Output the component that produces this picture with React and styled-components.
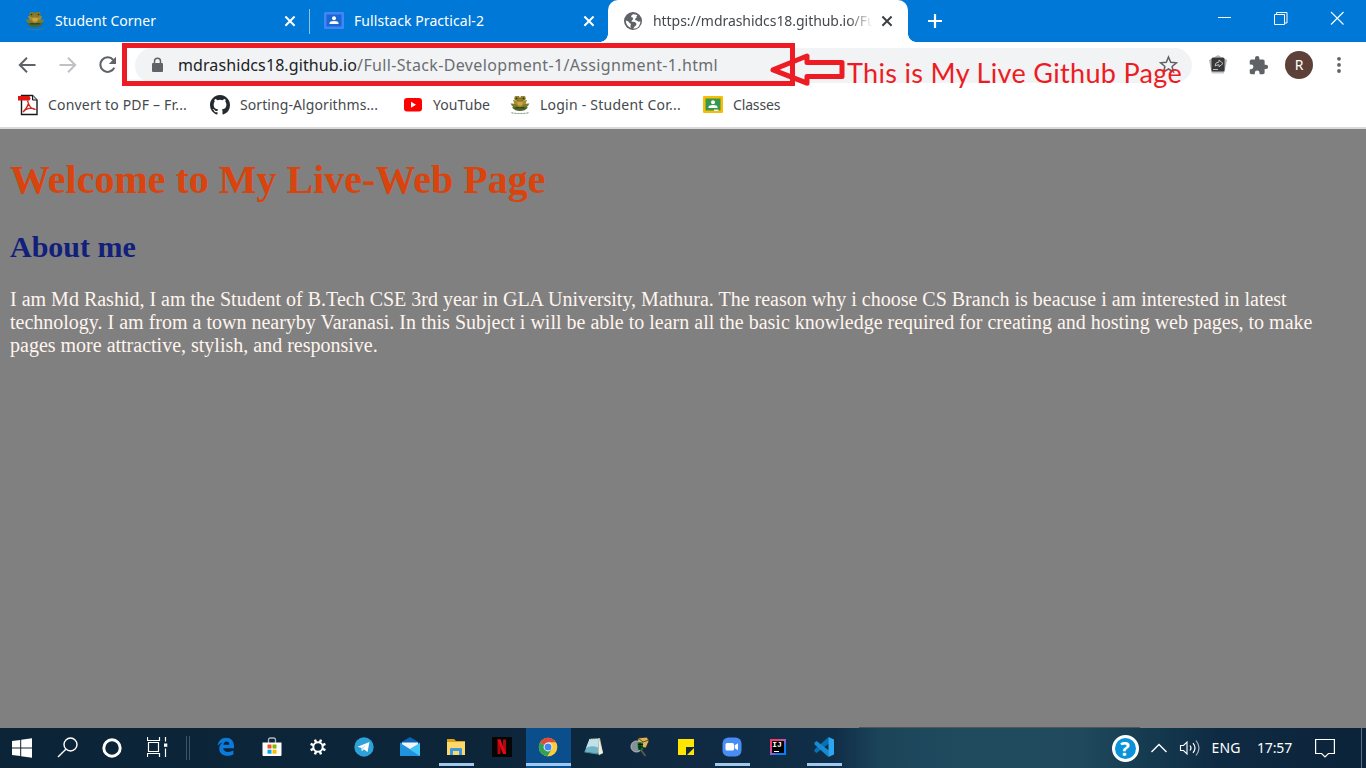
import React from "react";
import styled, { createGlobalStyle } from "styled-components";

const GlobalStyle = createGlobalStyle`
  *, *::before, *::after { box-sizing: border-box; }
  html, body { margin: 0; padding: 0; overflow: hidden; }
  svg { display: block; flex: none; }
`;

const Screen = styled.div`
  position: relative;
  display: flex;
  flex-direction: column;
  width: 1366px;
  height: 768px;
  overflow: hidden;
  font-family: "Noto Sans", "Open Sans", sans-serif;
  font-size: 14px;
`;

/* ---------- tab strip ---------- */

const TabStrip = styled.header`
  display: flex;
  height: 42px;
  padding-left: 10px;
  background: #0078d7;
  color: #fff;
`;

const Tab = styled.div`
  position: relative;
  display: flex;
  align-items: center;
  width: ${(p) => (p.$active ? 300 : 299)}px;
  height: 42px;
  padding: 0 ${(p) => (p.$active ? 14 : 12)}px 0 15px;
  border-radius: 10px 10px 0 0;
  background: ${(p) => (p.$active ? "#fff" : "transparent")};
  color: ${(p) => (p.$active ? "#45484c" : "#fff")};

  ${(p) =>
    p.$active &&
    `
    &::before, &::after {
      content: "";
      position: absolute;
      bottom: 0;
      width: 8px;
      height: 8px;
    }
    &::before {
      left: -8px;
      background: radial-gradient(circle at 0 0, transparent 7.5px, #fff 8px);
    }
    &::after {
      right: -8px;
      background: radial-gradient(circle at 100% 0, transparent 7.5px, #fff 8px);
    }
  `}
`;

const TabTitle = styled.span`
  flex: 1;
  height: 20px;
  margin: 0 4px 0 10px;
  line-height: 20px;
  letter-spacing: ${(p) => p.$tracking || 0}px;
  white-space: nowrap;
  ${(p) =>
    p.$fade &&
    "mask-image: linear-gradient(to right, #000 195px, transparent 220px);"}
`;

const TabDivider = styled.i`
  align-self: center;
  width: 1px;
  height: 25px;
  margin: 0 -1px 0 0;
  background: #8cc2ee;
`;

const NewTab = styled.div`
  display: flex;
  align-items: center;
  padding-left: 19px;
`;

const WindowControls = styled.div`
  display: flex;
  gap: 42px;
  margin-left: auto;
  padding: 11px 22px 0 0;
`;

/* ---------- toolbar ---------- */

const Toolbar = styled.div`
  display: flex;
  align-items: center;
  height: 46px;
  padding: 0 17px;
  background: #fff;
`;

const NavButtons = styled.nav`
  display: flex;
  gap: 20px;
  width: 118px;
`;

const Omnibox = styled.div`
  display: flex;
  flex: none;
  align-items: center;
  width: 1057px;
  height: 35px;
  padding: 0 14px 0 16px;
  border-radius: 18px;
  background: #f1f3f4;
  font-size: 16px;
`;

const Url = styled.span`
  flex: 1;
  margin-left: 14px;
  color: #6b6e72;
  line-height: 24px;
  letter-spacing: 0.35px;
  white-space: nowrap;
`;

const Host = styled.span`
  color: #202124;
  letter-spacing: 0.095px;
`;

const Extensions = styled.div`
  display: flex;
  flex: none;
  align-items: center;
  gap: 16px;
  padding-left: 16px;

  > svg:first-child {
    margin-right: 4px;
  }
`;

const Avatar = styled.div`
  width: 28px;
  height: 28px;
  margin-right: 2px;
  border-radius: 50%;
  background: #5d4037;
  color: #fff;
  line-height: 28px;
  text-align: center;
`;

/* ---------- bookmarks ---------- */

const BookmarkBar = styled.div`
  display: flex;
  height: 41px;
  padding: 7px 0 0 18px;
  border-bottom: 2px solid #d8d9db;
  background: #fff;
  color: #45494d;
`;

const Bookmark = styled.div`
  display: flex;
  align-items: center;
  gap: 10px;
  width: ${(p) => p.$width}px;
  height: 20px;
  line-height: 20px;
  letter-spacing: ${(p) => p.$tracking}px;
  white-space: nowrap;
`;

/* ---------- page ---------- */

const Page = styled.main`
  flex: 1;
  padding: 0 10px;
  background: #808080;
  font-family: "Liberation Serif", "Times New Roman", serif;
`;

const Title = styled.h1`
  margin: 28px 0 0;
  color: #d9430d;
  font-size: 40px;
  line-height: 46px;
`;

const Subtitle = styled.h2`
  margin: 27px 0 0;
  color: #12207c;
  font-size: 30px;
  line-height: 34px;
`;

const Paragraph = styled.p`
  margin: 24px 0 0;
  color: #fff5ee;
  font-size: 20px;
  line-height: 23px;
`;

/* ---------- annotation ---------- */

const UrlFrame = styled.div`
  position: absolute;
  left: 122px;
  top: 43px;
  width: 673px;
  height: 43px;
  border: 5px solid #ed1c24;
`;

const Note = styled.div`
  position: absolute;
  left: 768px;
  top: 52px;
  display: flex;
  color: #ed1c24;
  font-family: Lato, "Open Sans", sans-serif;
  font-size: 27px;
  letter-spacing: 0.33px;
  white-space: nowrap;
`;

const NoteText = styled.span`
  line-height: 41px;
`;

/* ---------- taskbar ---------- */

const Taskbar = styled.footer`
  position: relative;
  display: flex;
  height: 40px;
  background: linear-gradient(
    to right,
    #0b2438 0,
    #0c2539 480px,
    #0f2a42 700px,
    #102e48 835px,
    #1b4459 880px,
    #204b5f 960px,
    #20495d 1080px,
    #153a50 1150px,
    #0e2a42 1220px,
    #0c2339 1366px
  );
  color: #fff;
`;

const WindowEdge = styled.i`
  position: absolute;
  left: 859px;
  top: -1px;
  width: 281px;
  height: 1px;
  background: #505657;
`;

const TaskButton = styled.div`
  display: flex;
  align-items: center;
  justify-content: center;
  width: 45px;
  height: 40px;
  padding: 0 1px 1px 0;
`;

const AppButton = styled.div`
  position: relative;
  display: flex;
  align-items: center;
  justify-content: center;
  width: ${(p) => (p.$focused ? 45 : 46)}px;
  height: 40px;
  margin-left: ${(p) => (p.$focused ? 1 : 0)}px;
  padding: 0 ${(p) => (p.$focused ? 1 : 0)}px 2px 0;
  background: ${(p) => (p.$focused ? "#0a4f8b" : "transparent")};

  &::after {
    content: "";
    display: ${(p) => (p.$open || p.$focused ? "block" : "none")};
    position: absolute;
    left: ${(p) => (p.$focused ? 0 : 6)}px;
    right: ${(p) => (p.$focused ? 0 : 5)}px;
    bottom: 2px;
    height: 3px;
    background: #a1c8ef;
  }
`;

const Grip = styled.div`
  display: flex;
  gap: 2px;
  width: 23px;
  padding: 8px 0 0 6px;

  i {
    width: 1px;
    height: 24px;
    background: #3d5263;
  }
`;

const Tray = styled.div`
  display: flex;
  align-items: center;
  margin-left: auto;
  padding-right: 4px;
`;

const TrayItem = styled.div`
  display: flex;
  justify-content: center;
  width: ${(p) => p.$width}px;
  line-height: 40px;
  letter-spacing: ${(p) => p.$tracking || 0}px;
  white-space: nowrap;
`;

const DesktopEdge = styled.i`
  width: 1px;
  height: 40px;
  margin-left: 12px;
  background: #5c6f80;
`;

/* ---------- icons ---------- */

const Svg = ({ w = 20, h, box, children }) => (
  <svg width={w} height={h || w} viewBox={box || `0 0 ${w} ${h || w}`} fill="none">
    {children}
  </svg>
);

const Crest = () => (
  <Svg>
    <path d="M10 12 4.500 1.500 9 1l1 2 1-2 4.500.5z" fill="#8f7a26" />
    <circle cx="6.500" cy="3.500" r="2.200" fill="#86762a" />
    <circle cx="13.500" cy="3.500" r="2.200" fill="#86762a" />
    <path d="M10 13Q5 13 3 5q5 0 7 5 2-5 7-5-2 8-7 8z" fill="#a58c33" />
    <path d="M10 14Q3 14 .5 8.500 7 8 10 12.500 13 8 19.500 8.500 17 14 10 14z" fill="#7a7d30" />
    <path d="M2 12.500q4-1.500 8 .5 4-2 8-.5-3 3.500-8 3.500t-8-3.500z" fill="#4f6428" />
    <path d="M7 7.500q3-2 6 0l-1 3H8z" fill="#d0a43a" />
    <path d="M5.500 12.800h9" stroke="#2f371d" />
    <path d="M1.500 17.800q8.500 1.500 17 0" stroke="#5f8069" strokeDasharray="2 1" />
    <circle cx="6.500" cy="3.500" r=".8" fill="#33300f" />
    <circle cx="13.500" cy="3.500" r=".8" fill="#33300f" />
  </Svg>
);

const ClassroomIcon = ({ blue }) => (
  <Svg>
    <rect y="1" width="20" height="17" rx="1" fill={blue ? "#4285f4" : "#fbbc05"} />
    <rect x="2.500" y="3.500" width="15" height="12" fill={blue ? "#1967d2" : "#34994f"} />
    <circle cx="10" cy="7.300" r="2" fill="#fff" />
    <path d="M5.500 13v-1q0-2 4.500-2t4.500 2v1z" fill="#fff" />
    {!blue && <path d="M11 14.500h4.500v1.500H11z" fill="#e8edf3" />}
  </Svg>
);

const GlobeIcon = () => (
  <Svg w={20} box="-1 -1 20 20">
    <circle cx="9" cy="9" r="9" fill="#5f6368" />
    <path d="M9 2.300Q6.300 3.800 7.300 5.300q2.700.4 1.400 2.500-1.500.8-1.100 2 3-.5 4.500 1.300 1 2.500-1.800 3.600l-1 2q6.800-.2 7.200-7.500-2.500 1.200-3.500-.7-2.500 0-1.700-2 2-.5 1.200-2.200 1.400-.5.300-1.300-2-.9-3.800-.7z" fill="#fff" />
    <path d="M1.800 8.600q2.700.4 3.700 2.400 2 .5 1.200 2.300-.8 1.200.3 2.600Q2 14.300 1.800 8.600z" fill="#fff" />
  </Svg>
);

const CrossIcon = ({ color = "#fff" }) => (
  <Svg w={14}>
    <path d="m2.400 2.500 9.200 9.200M11.600 2.500 2.400 11.700" stroke={color} strokeWidth="2" />
  </Svg>
);

const PlusIcon = () => (
  <Svg w={16}>
    <path d="M8 1v14M1 8h14" stroke="#fff" strokeWidth="2.200" />
  </Svg>
);

const MinimizeIcon = () => (
  <Svg w={14}>
    <path d="M0 6.500h13" stroke="#fff" />
  </Svg>
);
const RestoreIcon = () => (
  <Svg w={14}>
    <path d="M.5 3.500h10v10H.5zM2.500 3.500v-2h10.500v10.500h-2" stroke="#fff" />
  </Svg>
);
const CloseIcon = () => (
  <Svg w={14}>
    <path d="m1 1 12.500 12.500M13.500 1 1 13.500" stroke="#fff" strokeWidth="1.100" />
  </Svg>
);

const BackIcon = () => (
  <Svg>
    <path d="M18.500 10H3.200M10 2.800 2.800 10l7.200 7.200" stroke="#5f6368" strokeWidth="2" />
  </Svg>
);
const ForwardIcon = () => (
  <Svg>
    <path d="M2.500 10h15.300M11 2.800l7.200 7.200-7.200 7.200" stroke="#bfc1c4" strokeWidth="2" />
  </Svg>
);
const ReloadIcon = () => (
  <Svg>
    <path d="M17.300 12.600A7.300 7.300 0 1 1 16.300 5" stroke="#5f6368" strokeWidth="2.100" />
    <path d="M19 1.800V9h-7.200z" fill="#5f6368" />
  </Svg>
);
const LockIcon = () => (
  <Svg w={13} h={16}>
    <rect x="1" y="6" width="11" height="9" rx="1" fill="#5f6368" />
    <path d="M3.500 6V4.300a3 3 0 0 1 6 0V6" stroke="#5f6368" strokeWidth="1.500" />
  </Svg>
);
const StarIcon = () => (
  <Svg>
    <path d="m10.500 2 2.200 5.300 5.700.5-4.300 3.700 1.300 5.500-4.900-3-4.900 3 1.300-5.500-4.300-3.700 5.700-.5z" stroke="#5f6368" strokeWidth="1.500" />
  </Svg>
);
const ShareExtIcon = () => (
  <Svg>
    <path d="m10 0 4 2.500H6zM1 5l4-2v14L3.500 17zM19 5l-4-2v14l1.500 0z" fill="#b2b4b5" />
    <path d="M3 16h13v2.500H4z" fill="#c4c5c6" />
    <rect x="3.500" y="2.500" width="13" height="14" rx="1.500" fill="#36383a" />
    <path d="M7 11q0-4 4-4V5l4 3.500-4 3.300v-2Q9 9.800 7 11zM5 14.500h5" stroke="#c9cbcc" strokeWidth=".9" />
  </Svg>
);
const PuzzleIcon = () => (
  <Svg w={21} box="0 0 24 24">
    <path
      d="M20.500 11H19V7c0-1.100-.9-2-2-2h-4V3.500a2.500 2.500 0 0 0-5 0V5H4c-1.100 0-2 .9-2 2v3.800h1.500a2.700 2.700 0 0 1 0 5.400H2V20c0 1.100.9 2 2 2h3.800v-1.500a2.700 2.700 0 0 1 5.400 0V22H17c1.100 0 2-.9 2-2v-4h1.500a2.500 2.500 0 0 0 0-5z"
      fill="#5f6368"
    />
  </Svg>
);
const DotsIcon = () => (
  <Svg w={16} h={20}>
    {[3.800, 9.900, 16].map((y) => (
      <circle key={y} cx="8" cy={y} r="1.900" fill="#5f6368" />
    ))}
  </Svg>
);

const PdfIcon = () => (
  <Svg w={20} h={22}>
    <path d="M3.500 1.500h11l4.500 4.500v14.500H3.500z" fill="#fff" stroke="#16181a" strokeWidth="1.400" />
    <path d="M14.500 1.500V6H19" fill="#c9cbcc" stroke="#16181a" />
    <path d="M0 2h11.500l1 2.500-1 2H0z" fill="#e3150f" />
    <path d="M9.500 6.500c2 3-1 8-4.500 11.500 3-4 9-4.500 12-2.800-3.500.5-6.500-4-7.500-8.700z" stroke="#d3251d" strokeWidth="1.300" />
  </Svg>
);
const GithubIcon = () => (
  <Svg box="0 0 16 16">
    <path
      fill="#24292f"
      d="M8 0C3.580 0 0 3.580 0 8c0 3.540 2.290 6.530 5.470 7.590.4.070.55-.17.55-.38 0-.19-.010-.82-.010-1.490-2.010.37-2.530-.49-2.690-.94-.09-.23-.48-.94-.82-1.130-.28-.15-.68-.52-.010-.53.63-.010 1.080.58 1.230.82.72 1.210 1.870.87 2.330.66.070-.52.28-.87.510-1.070-1.780-.2-3.640-.89-3.640-3.950 0-.87.310-1.590.82-2.150-.08-.2-.36-1.020.08-2.120 0 0 .67-.21 2.200.82a7.600 7.600 0 0 1 4 0c1.530-1.040 2.200-.82 2.200-.82.44 1.100.16 1.920.08 2.120.51.56.82 1.270.82 2.150 0 3.070-1.870 3.750-3.650 3.950.29.25.54.73.54 1.480 0 1.070-.010 1.930-.010 2.200 0 .21.15.46.55.38A8.010 8.010 0 0 0 16 8c0-4.420-3.580-8-8-8z"
    />
  </Svg>
);
const YoutubeIcon = () => (
  <Svg>
    <rect x="1" y="3" width="18" height="13.500" rx="3" fill="#f00" />
    <path d="M8 6.800v6l5-3z" fill="#fff" />
  </Svg>
);

const WindowsIcon = () => (
  <Svg>
    <path d="m0 3 8.200-1.100v7.600H0zM9.200 1.700 20 .2v9.300H9.200zM0 10.500h8.200v7.600L0 17zM9.200 10.500H20v9.300L9.200 18.300z" fill="#fff" />
  </Svg>
);
const SearchIcon = () => (
  <Svg w={21}>
    <circle cx="13.500" cy="7.500" r="6.500" stroke="#fff" strokeWidth="1.400" />
    <path d="M8.800 12.200 1 20" stroke="#fff" strokeWidth="1.400" />
  </Svg>
);
const CortanaIcon = () => (
  <Svg>
    <circle cx="10" cy="10" r="8.200" stroke="#fff" strokeWidth="2.900" />
  </Svg>
);
const TaskViewIcon = () => (
  <Svg w={21}>
    <path d="M.5 0v3.500h12V0M.5 20v-3.500h12V20M1.500 5.500h10v9h-10zM18.500 0v20" stroke="#fff" strokeWidth="1.200" />
    <path d="M18.500 4.500v7" stroke="#0b2438" strokeWidth="3" />
    <rect x="17" y="6.500" width="3.300" height="3.300" fill="#fff" />
  </Svg>
);
const EdgeIcon = () => (
  <Svg>
    <path
      d="M1.500 9C2.300 4 5.500.8 10 .8c5 0 8 3.500 8 8.200v2.200H7.200c.2 2.600 2.300 3.800 5 3.800 1.900 0 3.600-.5 5.200-1.400v3.800c-1.700.9-3.700 1.400-6 1.400-5 0-8.200-3-8.200-7.300 0-2.500 1.300-4.700 3.500-6C4.500 6 3 7.200 1.500 9zm5.900-1.200h6c0-2.200-1-3.400-2.900-3.400-1.700 0-2.800 1.300-3.100 3.400z"
      fill="#0a7bdb"
    />
  </Svg>
);
const StoreIcon = () => (
  <Svg>
    <path d="M6.500 6V3q0-2 2-2h3q2 0 2 2v3" stroke="#aeb7bd" strokeWidth="1.300" />
    <path d="M.5 5.500h19V18q0 1-1 1h-17q-1 0-1-1z" fill="#fff" />
    <path d="M5.500 7.500h4v4h-4z" fill="#f25022" />
    <path d="M10.500 7.500h4v4h-4z" fill="#7fba00" />
    <path d="M5.500 12.700h4v4h-4z" fill="#00a4ef" />
    <path d="M10.500 12.700h4v4h-4z" fill="#ffb900" />
  </Svg>
);
const GearIcon = () => (
  <Svg w={16}>
    <circle cx="8" cy="8" r="4.700" stroke="#fff" strokeWidth="2" />
    {[22.500, 67.500, 112.500, 157.500, 202.500, 247.500, 292.500, 337.500].map((a) => (
      <path key={a} d="M8 0v3" stroke="#fff" strokeWidth="2.500" transform={`rotate(${a} 8 8)`} />
    ))}
  </Svg>
);
const TelegramIcon = () => (
  <Svg>
    <circle cx="10" cy="10" r="9.700" fill="#2ca1da" />
    <path d="M3.500 9.800 15.500 5l-2 10-3.700-2.700-1.900 1.900-.4-3.200z" fill="#fff" />
    <path d="m7.500 11 5.500-4-4.200 4.800-.9 2.400z" fill="#c4dcea" />
  </Svg>
);
const MailIcon = () => (
  <Svg>
    <path d="m0 6 10-6 10 6v6H0z" fill="#0a64b5" />
    <path d="M2 5.500h16v8H2z" fill="#f3f5f7" />
    <path d="M0 6v13h20V6L10 12z" fill="#37b4ee" />
    <path d="m0 6 20 13H0z" fill="#1f93dd" />
    <path d="m10 12.500 10-6.500v13z" fill="#41c6f6" />
  </Svg>
);
const FolderIcon = () => (
  <Svg>
    <path d="M1 2h7l2 2h9v3H1z" fill="#dca11a" />
    <path d="M1 5h18v13H1z" fill="#ffd868" />
    <path d="M4 18v-6q0-1 1-1h10q1 0 1 1v6h-3v-4H7v4z" fill="#4097dd" />
  </Svg>
);
const NetflixIcon = () => (
  <Svg>
    <path d="M0 0h20v20H0z" fill="#050505" />
    <path d="M5.500 2.500h3v14.500h-3zM11 2.500h3v14.500h-3z" fill="#b20710" />
    <path d="M5.500 2.500h3L14 17h-3z" fill="#e50914" />
  </Svg>
);
const ChromeIcon = () => (
  <Svg>
    <circle cx="10" cy="10" r="9.200" fill="#fccc3e" />
    <path d="M10 10 2 5.400A9.200 9.200 0 0 1 18 5.500H10z" fill="#df4a3b" />
    <path d="M10 10 2 5.400A9.200 9.200 0 0 0 9.500 19.200l4.400-7z" fill="#32a055" />
    <path d="M10 5.500h8a9.200 9.200 0 0 1-8.500 13.700l4.400-7z" fill="#fccc3e" />
    <circle cx="10" cy="10" r="4.400" fill="#fff" />
    <circle cx="10" cy="10" r="3.500" fill="#4285f4" />
  </Svg>
);
const NotepadIcon = () => (
  <Svg>
    <path d="m5 2 11-1 3 15-4 2z" fill="#c6bb91" />
    <path d="M5.500 2 15 1.500 13.500 17 .5 15z" fill="#6fb3c6" />
    <path d="m5.500 2 9.500-.5-1 9Q7 8 2 11z" fill="#c3e0e6" />
    <path d="m15 2 4 14-4 2z" fill="#e9eeee" />
    <path d="M6 1.800 15 1.300" stroke="#46514d" strokeDasharray="1.200 1" />
    <path d="m.5 15 13 2 2 1" stroke="#43889b" />
  </Svg>
);
const AnalyzerIcon = () => (
  <Svg>
    <path d="m8 1 9-1 2 4-3 7-9-1z" fill="#ddb45d" stroke="#21211d" strokeWidth=".8" />
    <path d="m8 1 5 4 6-2" stroke="#624d20" />
    <circle cx="6.500" cy="9.500" r="5.500" fill="#849198" stroke="#b1b8b9" />
    <path d="M7.500 5.500h5.500V13H8z" fill="#087323" />
    <path d="M8 7.500h5M8 10h5M10 5.500V13" stroke="#07170b" />
    <path d="m11 13 4.500 6" stroke="#595a50" strokeWidth="1.800" />
  </Svg>
);
const StickyIcon = () => (
  <Svg w={16}>
    <path d="M0 0h16v8H8v8H0z" fill="#ffe500" />
    <path d="M16 9v7H9z" fill="#ffe500" />
    <path d="M8 8h8l-8 8z" fill="#10283b" />
  </Svg>
);
const ZoomIcon = () => (
  <Svg>
    <rect x=".5" y=".5" width="19" height="19" rx="6" fill="#478df5" />
    <rect x="3.500" y="6" width="8.500" height="7.500" rx="1.500" fill="#fff" />
    <path d="m12.700 8.300 3.300-2v7l-3.300-2z" fill="#fff" />
  </Svg>
);

const IdeaBadge = styled.div`
  width: 16px;
  height: 16px;
  padding: 2px;
  background: linear-gradient(135deg, #fc3b65 25%, #aa5dc8 50%, #087cfa 70%);

  span {
    display: block;
    width: 12px;
    height: 12px;
    padding-right: 2px;
    background: linear-gradient(#fff, #fff) 2px 10px / 5px 1px no-repeat #000;
    color: #fff;
    font: bold 8px/8px "Liberation Mono", monospace;
    text-align: center;
  }
`;

const VsCodeIcon = () => (
  <Svg>
    <path d="m14.500 0-14 12.500v2L2.500 16 15 6.500z" fill="#0870b5" />
    <path d="m14.500 20-14-12.500v-2L2.500 4 15 13.500z" fill="#168bd1" />
    <path d="M14.500 0 20 2.500v15L14.500 20z" fill="#2aa7f0" />
  </Svg>
);

const HelpBadge = styled.div`
  width: 27px;
  height: 27px;
  border: 3px solid #fff;
  border-radius: 50%;
  background: #0a93d8;
  font: bold 20px/21px "Open Sans", sans-serif;
  text-align: center;
`;

const ChevronIcon = () => (
  <Svg w={16} h={10}>
    <path d="m.5 9 7.500-7.500L15.500 9" stroke="#fff" strokeWidth="1.400" />
  </Svg>
);
const VolumeIcon = () => (
  <Svg w={22} h={20}>
    <path d="M1.500 7.500h3L8 4v12l-3.500-3.500h-3z" stroke="#fff" strokeWidth="1.100" />
    <path d="M11 7.500q2 2.500 0 5M14 5.200q4 4.800 0 9.600" stroke="#fff" strokeWidth="1.200" />
    <path d="M17 2.500q6 7.500 0 15" stroke="#a8b5bf" strokeWidth="1.200" />
  </Svg>
);
const NotificationIcon = () => (
  <Svg w={20}>
    <path d="M.6 1.500h18.800v14h-6L10 19l-3.400-3.500h-6z" stroke="#fff" strokeWidth="1.200" />
  </Svg>
);

const ArrowIcon = () => (
  <Svg w={79} h={36} box="768 52 79 36">
    <path
      d="M773 69.800 807 56v6.500h35v14h-35v6.700z"
      stroke="#ed1c24"
      strokeWidth="5"
      strokeLinejoin="round"
    />
  </Svg>
);

const bookmarks = [
  { label: "Convert to PDF – Fr...", icon: <PdfIcon />, width: 192, tracking: 0.186 },
  { label: "Sorting-Algorithms...", icon: <GithubIcon />, width: 193, tracking: 0.087 },
  { label: "YouTube", icon: <YoutubeIcon />, width: 107, tracking: 0.06 },
  { label: "Login - Student Cor...", icon: <Crest />, width: 193, tracking: 0.235 },
  { label: "Classes", icon: <ClassroomIcon />, width: 90, tracking: -0.15 },
];

const apps = [
  { id: "edge", icon: <EdgeIcon /> },
  { id: "store", icon: <StoreIcon /> },
  { id: "settings", icon: <GearIcon /> },
  { id: "telegram", icon: <TelegramIcon /> },
  { id: "mail", icon: <MailIcon /> },
  { id: "explorer", icon: <FolderIcon />, open: true },
  { id: "netflix", icon: <NetflixIcon /> },
  { id: "chrome", icon: <ChromeIcon />, focused: true },
  { id: "notepad", icon: <NotepadIcon /> },
  { id: "analyzer", icon: <AnalyzerIcon /> },
  { id: "sticky", icon: <StickyIcon /> },
  { id: "zoom", icon: <ZoomIcon />, open: true },
  { id: "idea", icon: <IdeaBadge><span>IJ</span></IdeaBadge> },
  { id: "vscode", icon: <VsCodeIcon />, open: true },
];

export default function App() {
  return (
    <Screen>
      <GlobalStyle />
      <TabStrip>
        <Tab>
          <Crest />
          <TabTitle $tracking={0.02}>Student Corner</TabTitle>
          <CrossIcon />
        </Tab>
        <TabDivider />
        <Tab>
          <ClassroomIcon blue />
          <TabTitle $tracking={0.07}>Fullstack Practical-2</TabTitle>
          <CrossIcon />
        </Tab>
        <Tab $active>
          <GlobeIcon />
          <TabTitle $tracking={-0.05} $fade>https://mdrashidcs18.github.io/Fu</TabTitle>
          <CrossIcon color="#3c4043" />
        </Tab>
        <NewTab>
          <PlusIcon />
        </NewTab>
        <WindowControls>
          <MinimizeIcon />
          <RestoreIcon />
          <CloseIcon />
        </WindowControls>
      </TabStrip>

      <Toolbar>
        <NavButtons>
          <BackIcon />
          <ForwardIcon />
          <ReloadIcon />
        </NavButtons>
        <Omnibox>
          <LockIcon />
          <Url>
            <Host>mdrashidcs18.github.io</Host>/Full-Stack-Development-1/Assignment-1.html
          </Url>
          <StarIcon />
        </Omnibox>
        <Extensions>
          <ShareExtIcon />
          <PuzzleIcon />
          <Avatar>R</Avatar>
          <DotsIcon />
        </Extensions>
      </Toolbar>

      <BookmarkBar>
        {bookmarks.map((b) => (
          <Bookmark key={b.label} $width={b.width} $tracking={b.tracking}>
            {b.icon}
            {b.label}
          </Bookmark>
        ))}
      </BookmarkBar>

      <Page>
        <Title>Welcome to My Live-Web Page</Title>
        <Subtitle>About me</Subtitle>
        <Paragraph>
          I am Md Rashid, I am the Student of B.Tech CSE 3rd year in GLA University, Mathura. The
          reason why i choose CS Branch is beacuse i am interested in latest technology. I am from a
          town nearyby Varanasi. In this Subject i will be able to learn all the basic knowledge
          required for creating and hosting web pages, to make pages more attractive, stylish, and
          responsive.
        </Paragraph>
      </Page>

      <Taskbar>
        <WindowEdge />
        <TaskButton><WindowsIcon /></TaskButton>
        <TaskButton><SearchIcon /></TaskButton>
        <TaskButton><CortanaIcon /></TaskButton>
        <TaskButton><TaskViewIcon /></TaskButton>
        <Grip><i /><i /></Grip>
        {apps.map((a) => (
          <AppButton key={a.id} $open={a.open} $focused={a.focused}>
            {a.icon}
          </AppButton>
        ))}
        <Tray>
          <TrayItem $width={34}><HelpBadge>?</HelpBadge></TrayItem>
          <TrayItem $width={34}><ChevronIcon /></TrayItem>
          <TrayItem $width={28}><VolumeIcon /></TrayItem>
          <TrayItem $width={44} $tracking={0.1}>ENG</TrayItem>
          <TrayItem $width={53} $tracking={-0.15}>17:57</TrayItem>
          <TrayItem $width={48}><NotificationIcon /></TrayItem>
          <DesktopEdge />
        </Tray>
      </Taskbar>

      <UrlFrame />
      <Note>
        <ArrowIcon />
        <NoteText>This is My Live Github Page</NoteText>
      </Note>
    </Screen>
  );
}
